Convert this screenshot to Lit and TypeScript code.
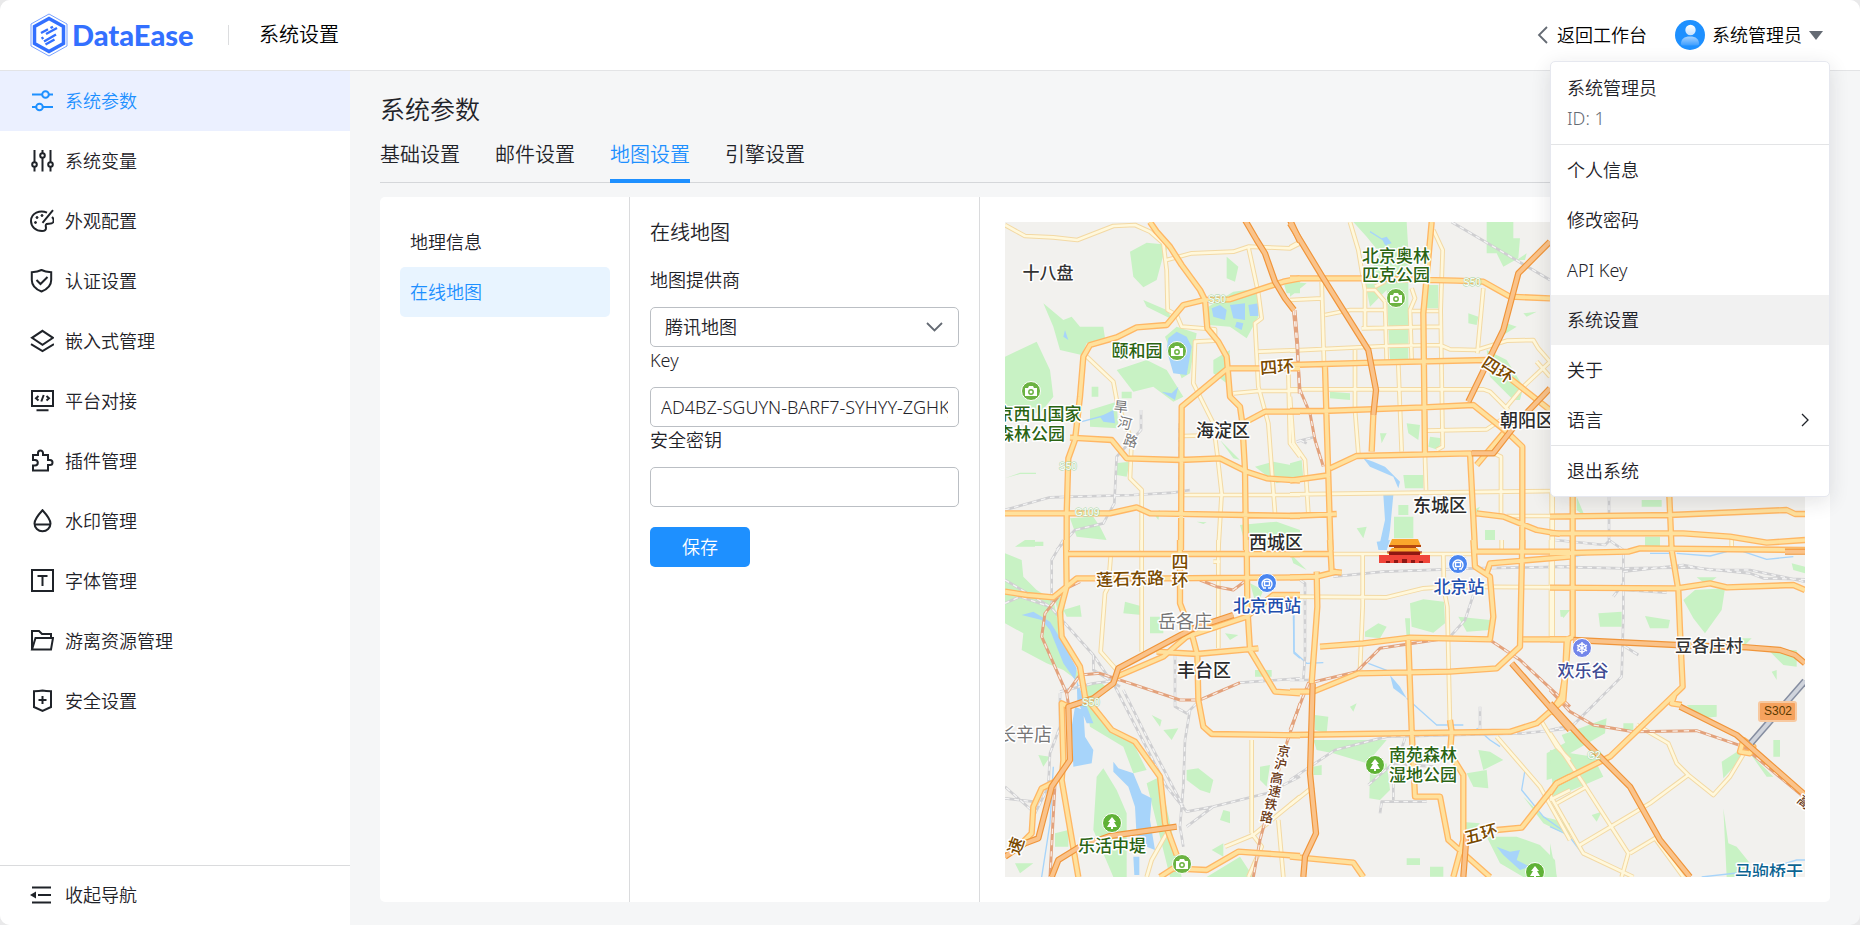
import { LitElement, html, svg, css } from "lit";
import { customElement, state } from "lit/decorators.js";
import { classMap } from "lit/directives/class-map.js";

const NAV = [
  { label: "系统参数", icon: svg`<path d="M2 5.5H12M19 5.5H23M2 18H6M13 18H23"/><circle cx="15.5" cy="5.5" r="3.3"/><circle cx="9.5" cy="18" r="3.3"/>` },
  { label: "系统变量", icon: svg`<path d="M4.5 1V13M4.5 18V22.5M12.500 1V4M12.500 9V22.500M20.500 1V13M20.500 18V22.500"/><circle cx="4.500" cy="15.500" r="2.300"/><circle cx="12.500" cy="6.500" r="2.300"/><circle cx="20.500" cy="15.500" r="2.300"/>` },
  { label: "外观配置", icon: svg`<path d="M17 3.600C10 .5 1 4 1 12c0 6 5 10 11 10 2.500 0 4-1 4-3 0-1.500-1-3 .5-4 1.500-.800 5 .500 6.500-1.500 1-1.500.500-4-1-5.500M23 1.200 12.500 13.800"/><circle cx="7" cy="8.500" r="1" class="dot"/><circle cx="12" cy="6.500" r="1" class="dot"/><circle cx="5.500" cy="13.500" r="1" class="dot"/>` },
  { label: "认证设置", icon: svg`<path d="M11.500 1C8.500 2.500 5 3 1.800 3.200V11c0 6 4.500 9.500 9.700 11.500C16.700 20.500 21.200 17 21.200 11V3.200C18 3 14.500 2.500 11.500 1ZM6.500 11l4 4 7-7"/>` },
  { label: "嵌入式管理", icon: svg`<path d="M12.500 1.800 23 8.800 12.500 15.800 2 8.800ZM1 15.200 12.500 22 24 15.200"/>` },
  { label: "平台对接", icon: svg`<path d="M2 2H23V17H2ZM6.500 21.200H18.500M8.500 7 6 9.300 8.500 11.600M16.500 7 19 9.300 16.500 11.600M13.700 6 11.300 12.500"/>` },
  { label: "插件管理", icon: svg`<path d="M3 6H8V4a2.500 2.500 0 0 1 5 0V6H18V11H20a2.500 2.500 0 0 1 0 5H18V21.500H3V16.500H5a2.800 2.800 0 0 0 0-5.600H3Z"/>` },
  { label: "水印管理", icon: svg`<path d="M12.500 1.200C9 5 4.500 10 4.500 14.500a8 7.700 0 0 0 16 0C20.500 10 16 5 12.500 1.200ZM4.500 15.500H20.500"/>` },
  { label: "字体管理", icon: svg`<path d="M2 1H23V22H2ZM7.500 7H17.500M12.500 7V17"/>` },
  { label: "游离资源管理", icon: svg`<path d="M2 20V2H9L12 5H21V8.500M2 20.500 5.500 9H23L21 20.500Z"/>` },
  { label: "安全设置", icon: svg`<path d="M12.500 1.500C9.500 2.200 6.500 2.200 4 2.200V18L12.500 22 21 18V2.200C18.500 2.200 15.500 2.200 12.500 1.500ZM12.500 7V15M8.500 11H16.500"/>` },
];

const TABS = ["基础设置", "邮件设置", "地图设置", "引擎设置"];

interface Tile {
  x: number;
  y: number;
  green: string;
  water: string;
  river: string;
  rail: string;
  fast: string;
  minor: string;
  major: string;
  highway: string;
}

/* Vector tiles of the base map: each has an origin and is drawn at three units per pixel. */
const TILES: Tile[] = [
  {
    x: 1000, y: 210,
    green: "M390 125L440 98L510 105L490 135L470 210L430 232L400 200ZM130 280L190 330L215 320L240 350L310 350L315 385L260 400L245 435L180 420L160 350ZM15 440L110 395L150 480L160 560L120 610L15 600ZM625 290L700 245L780 235L775 320L740 385L690 350L625 345ZM495 380L530 350L590 370L570 490L545 505ZM350 480L440 450L500 480L550 560L520 575L460 530L400 545ZM430 270L500 300L520 330L440 290ZM640 450L690 420L680 520L640 490ZM765 770L820 755L900 770V800L830 820ZM720 945L830 935L900 960V1020H740ZM210 925L280 920L300 950L320 990L230 980ZM680 140L715 170L705 215L680 205ZM850 215H900V250H860ZM270 600L350 575L355 655L270 650ZM660 690L720 750L700 745ZM275 530H295V560H275ZM365 545H395V565H365ZM15 805L60 788H108V792H60ZM345 760L390 755L380 800L350 795ZM460 910L480 900L475 930ZM590 935L620 937L610 942ZM100 995H130V1008H100Z",
    water: "M505 385L530 365L560 380L575 410L560 495L520 490L500 420ZM635 295L660 285L680 300L675 330L640 320ZM690 285L735 280V330L700 325ZM745 285L775 280V318H750ZM710 335L730 340L725 360L705 350ZM485 545L515 550L535 530L525 570ZM195 360L205 390L190 380ZM300 620L340 600L345 640L310 635Z",
    river: "M245 635L320 615",
    rail: "M15 900L150 862L400 855L520 848L570 840M423 600V660L350 740L343 880L310 940L225 960L170 1020M538 640V840M900 690L920 700",
    fast: "M885 300L893 400L898 550",
    minor: "M15 45L75 78L160 82L232 90L340 48L405 45L450 65L490 100L500 180L503 300L530 315L545 350L645 358V392L585 395L580 520L640 640L655 760L665 850L655 1020M500 150L575 130L700 125L745 110L870 115L900 100M745 110L775 250L785 325L765 340L775 530L805 640L825 910M775 425L900 420M700 550L775 543H900M865 480L870 700L900 740M255 435L340 515L352 580L395 690L390 805L425 840V1020M550 855H900M550 678L660 675",
    major: "M450 36L470 65L510 110L545 165L600 240L615 270L622 355L655 395L680 440L683 475L690 560L720 590L727 640L735 780L738 1020M200 1020V910L205 745L225 690L240 560L250 440L270 405L350 382L410 352L500 345L550 285L612 270L690 268L850 215L900 205M683 475H900M683 475L545 590L543 1020M210 683L335 690L380 745L540 750L660 745L740 785L800 805L900 812M15 910H330L410 892L450 910L900 918M730 640L795 605H900",
    highway: "M735 30L770 90L795 130L825 215L855 265L882 300M870 30L900 95",
  },
  {
    x: 1290, y: 210,
    green: "M190 36H350L355 120V450H300L290 240L240 290L225 215L270 130L230 80ZM590 36H670V85L690 85L685 145L640 170L620 130L590 130ZM590 420L650 450L700 530L690 570L670 570L600 500ZM340 795H400V835H345ZM312 920H370V985H312ZM325 885H355V915H325ZM350 640L390 645L385 690L355 670ZM420 680L455 685L445 720L415 710ZM535 310L565 320L560 345L535 340ZM585 960H615V990H585ZM0 760L35 750L40 805H0ZM0 215L50 220L0 260ZM270 670H290L275 700ZM410 225H445V295H410ZM120 545L180 550V570L120 565ZM700 310L740 305L710 320ZM200 955L230 950L220 985ZM680 150L710 130L705 150ZM650 340L680 350L640 375ZM540 905L570 890L560 910Z",
    water: "M220 745L250 755L285 770L330 815L325 835L310 800L240 770ZM280 855L310 855L300 960L290 1020H265L285 930ZM275 85L290 80L305 100L285 105Z",
    river: "M240 65L280 90L300 120",
    rail: "M485 36L780 210M20 695L70 682",
    fast: "M10 300L20 400L30 540L60 610L75 690L100 770",
    minor: "M180 36L205 120L225 240V355M430 60L458 120L452 300L458 710L440 720M0 270L95 265M95 215L102 460M105 315L180 300H285M215 355L450 350M285 275L290 450M0 422L290 408L450 405L480 418L560 420L650 392L730 390L745 415L780 455L700 530L650 590M580 235L562 430M195 420V600L205 730M0 538H580L600 545L655 600M325 465L335 725M230 240H255L285 275M410 662L590 658L640 625M0 560L10 700L45 750L55 910M0 853L810 843M405 740L408 840M365 235L375 265L360 300L365 450M255 230L285 215M633 910V740L610 730M650 918H810M365 303H445M785 850V1020M0 112L30 95M740 455L780 500",
    major: "M425 36L400 310L405 735M0 205H210L500 212L580 215L660 260L780 265M0 465L250 458L590 450L780 600M0 603H100L400 592L550 585L650 665L697 710V1020M105 470L110 640L122 1020M250 615L245 725M120 775L200 738L540 730L555 1020M0 812L120 795M0 918L140 912M560 910L640 920L740 960L810 972M640 670L560 765",
    highway: "M0 40L100 205L235 420L258 540L250 615M780 95L685 190L640 360L535 575M780 535L680 640L610 730H545",
  },
  {
    x: 1000, y: 540,
    green: "M15 40L65 60L70 110L110 150L160 180L190 320L235 400L230 420L190 390L140 370L65 330L70 280L15 250ZM165 180L200 160L185 260ZM250 440L300 425L330 450L270 480L320 560L400 610L440 690L400 700L370 620L270 560ZM310 685L350 750L380 820V1011H340L280 870L290 710ZM440 730L480 710L545 1011H510L470 850ZM190 210L240 195L245 230L200 230ZM375 185L430 200L425 225L370 220ZM450 230H490V280H450ZM560 690L595 685L640 720L630 760L600 750L560 720ZM620 1011L720 950L760 1011ZM670 810L690 815V850L660 840ZM780 680L810 675L800 740L780 720ZM750 130L790 150L770 200ZM455 525L485 540L480 560ZM490 570L535 565L515 600ZM75 0H105V20H45ZM765 390H815V410H765ZM165 880L205 870V920H165ZM45 970L100 970L60 1000ZM115 645L150 650L130 680ZM675 280L715 285L690 300ZM635 930L670 910V950Z",
    water: "M65 225L100 215L150 245L190 310L230 385L225 420L190 370L150 270L125 240ZM225 500L250 510L255 590L280 630L275 670L220 680L215 560ZM230 420L245 460L280 550L260 550L232 480ZM340 665L355 685L400 700L425 760L455 775L450 840L465 930L440 920L430 890L410 890L405 800L385 740L340 695ZM400 950H418V1005H403Z",
    river: "M882 210V340L900 355M160 680L150 850L125 1011",
    rail: "M190 0L155 60V190M15 120L100 170L150 200L280 345L345 440L500 740L560 815L640 800L800 760L900 710M370 450L450 610L550 800M180 455L280 430L360 420M570 510L555 600L550 740L540 860L550 920M525 345V500L560 520L600 480M720 428L900 415M180 460V560L150 640L145 740L105 820L15 740M15 775L100 785M560 860L640 800M280 345V390L360 440M15 190L60 170L150 200",
    fast: "M240 125L190 150L135 220L125 290L200 460L240 405L300 400L420 440L540 480L600 480L720 428M200 460L208 510M900 490L850 640L780 900L760 1011M600 120L650 140L700 150L740 120M165 730L150 1011",
    minor: "M425 0V335M655 0V325M332 50L325 140L315 160L302 335L350 390M755 600V880M900 770L760 885L675 920M755 880L785 920L745 1011M440 1011L455 960L500 880M835 840L850 1011M640 65H660",
    major: "M198 0L200 140L180 215L185 290L240 380L255 470L335 570L405 605L480 710L495 850L530 945M200 42H900M15 155L80 165L160 172L230 115H490L900 112M540 0V190L575 280L592 345L595 480L610 560L635 582L900 586M740 0L742 200L750 330L825 455L900 460M470 335L590 342L775 325M205 500L185 490L190 660L185 720L235 1011M350 410L490 350L560 290L740 230L820 165H900M480 1011L520 985L620 990L715 935L900 948M65 910L95 880L100 800L125 745L165 725",
    highway: "M700 225L580 265L355 385L340 430L280 475L205 500L210 660L155 740L115 895L75 910L15 950M155 1011L175 960L240 920L330 888L530 860",
  },
  {
    x: 1290, y: 540,
    green: "M360 190L400 178L462 185L465 250L430 278L365 260ZM225 275L265 250L290 260L270 295L225 290ZM505 230L600 240V270L530 275ZM75 525L115 530L110 580L75 570ZM70 600H290L230 670L130 640L80 630ZM240 690L290 670L300 750L270 780L238 775ZM565 630L600 635L640 660L580 690ZM530 700L590 690L595 745L550 740ZM590 890H680L750 915L795 960L800 1011H700L630 970ZM770 640L840 600V700L770 720ZM420 980H460V1010H420ZM350 955H390V975H350ZM700 770L760 830L840 850V890L760 850ZM70 680L95 675V705H70ZM0 40L50 90L10 70ZM510 845L570 850L540 880ZM345 235H360V290H350ZM180 500L200 490L190 515ZM815 210H840L820 235Z",
    water: "M300 405L330 440L350 475L310 445ZM620 920L660 935L690 930L680 960L720 980L690 990L640 945ZM260 5L300 0L290 30L265 28Z",
    river: "M350 475L440 555L520 555M235 370L300 395M560 565L600 600L630 620M705 690L695 750L760 830L830 880M10 210L12 335L50 370L100 368",
    rail: "M30 120L45 130V350L40 420M0 420H60M130 110L280 95L550 85M550 85L840 80M550 165L525 240L480 290M0 720L135 630L290 590L700 580L840 565M345 595L310 700V780M410 785H275L270 820M235 735L310 670L430 680M570 500V570",
    fast: "M0 570L55 430L200 395L270 325L480 293L600 300L690 360L840 500",
    minor: "M218 40V200L210 390M460 40L462 150L472 200L480 560M0 170L290 172L400 145L480 140L840 142M783 0V290M0 795L70 740M620 590L750 740L840 900M755 545L800 620L840 660M780 780L840 750M120 42H550M635 0V30",
    major: "M0 42H120M120 0L125 95L155 98M0 112L80 110L140 95M80 95L82 200L65 430M90 320L220 310L360 293L600 298L610 230L600 110L555 80L550 0M0 455H70L205 400L480 395L620 385L690 320L697 0M355 300L365 570L375 770H450L475 900L600 1011M0 585L660 575L740 550L820 480L835 290M480 540L485 575L480 640L520 705V900L490 1011M0 950L190 968L220 1011M550 35H840M590 100L600 70L840 50M700 298H840M620 870L695 863L800 730L840 710",
    highway: "M68 430L60 700L78 880L45 950L40 1011M665 370L840 570M530 880L520 1011",
  },
  {
    x: 1550, y: 490,
    green: "M145 370L215 365V410H150ZM285 378L360 390L355 415L300 415ZM400 330L435 300L525 295L515 360L465 430L430 385ZM410 645H500V680L450 685ZM515 815L600 760L580 800L520 865ZM600 790L670 860L650 860ZM35 735L170 685L165 730L60 790ZM0 780L130 800L160 860L10 925ZM0 1060L20 1161H0ZM520 955L535 1060L560 1070L600 1120L590 1161H530ZM655 480H740V530L700 525ZM285 140H330V170H285ZM80 20L105 80L80 60ZM275 30H335V50H275ZM670 750H690V800H670ZM725 220L765 230V250L730 240ZM560 445H605L585 465ZM440 262H500L470 285ZM125 975L155 965L140 995ZM665 545L680 540V570ZM220 700L250 700V720H220ZM30 360H42V380H32Z",
    water: "",
    river: "M0 1010L55 1035L100 1095L215 1145M580 185L650 208L730 200M380 190L480 198L530 185M455 1161L640 1140L740 1110H765M70 200L130 190M300 190L360 190",
    rail: "M177 18V150L220 180V380L215 560L70 705L0 720M0 230L220 235L420 232L600 250L640 265L765 268M220 245L400 225L480 240L600 240L765 275M15 150L165 165L180 150M225 300L350 308M190 320L220 280M225 470L265 495",
    fast: "M0 600L60 665L130 705L250 725L440 722L580 770L760 920",
    minor: "M8 18V440M0 730L100 880L235 1090L215 1161M0 915L100 1090L250 1161M20 940L110 890M90 1065L300 940L415 855M260 705L355 760L380 820L415 855L490 915L540 860L585 785M240 1090L315 1045L400 1161M545 145V175",
    major: "M68 18V440L50 450L45 560L35 620L0 670M358 18L365 180L385 300L390 420L398 590L180 800L20 880L0 910M0 80L360 75L710 60L735 72H765M0 130H400L540 140L650 158L765 150M0 190L235 185L270 175L765 180M0 293L380 295L480 280L530 292L730 285L765 300M0 448H60M375 610L365 640L395 645M580 750L610 770L600 790L570 785Z",
    highway: "M70 450L380 465L590 472L690 480L735 495L765 520M0 640L100 750L170 820L240 890L330 1050L420 1161M390 650L560 735L600 770L765 915M705 185H765",
  },
];

type Layer = Exclude<keyof Tile, "x" | "y">;

/* text, centre x, baseline y, style, optional rotation */
const PLACES: [string, number, number, string, number?][] = [
  ["十八盘", 1048, 279, "town"],
  ["海淀区", 1223, 437, "district"],
  ["朝阳区", 1527, 427, "district"],
  ["东城区", 1440, 512, "district"],
  ["西城区", 1276, 549, "district"],
  ["丰台区", 1204, 677, "district"],
  ["豆各庄村", 1709, 652, "town"],
  ["颐和园", 1137, 357, "park"],
  ["北京奥林", 1396, 262, "park"],
  ["匹克公园", 1396, 281, "park"],
  ["京西山国家", 1039, 420, "park"],
  ["森林公园", 1031, 440, "park"],
  ["乐活中堤", 1112, 852, "park"],
  ["南苑森林", 1423, 761, "park"],
  ["湿地公园", 1423, 781, "park"],
  ["北京西站", 1267, 612, "station"],
  ["北京站", 1459, 593, "station"],
  ["欢乐谷", 1583, 677, "fun"],
  ["岳各庄", 1185, 628, "village"],
  ["长辛店", 1025, 741, "village"],
  ["旱", 1121, 412, "street", 5],
  ["河", 1125, 428, "street", 14],
  ["路", 1131, 446, "street", 18],
  ["四环", 1277, 373, "ring", -4],
  ["四环", 1498, 376, "ring", 33],
  ["莲石东路", 1130, 585, "ring", -2],
  ["四", 1180, 568, "ring"],
  ["环", 1180, 586, "ring"],
  ["五环", 1481, 840, "ring", -15],
  ["京", 1284, 756, "railway", 10],
  ["沪", 1281, 769, "railway", 10],
  ["高", 1277, 783, "railway", 10],
  ["速", 1275, 796, "railway", 10],
  ["铁", 1271, 809, "railway", 10],
  ["路", 1267, 822, "railway", 10],
  ["速", 1016, 852, "ring", -70],
  ["高", 1805, 807, "railway", 40],
  ["马驹桥干", 1769, 878, "canal"],
  ["S50", 1217, 303, "code"],
  ["S50", 1068, 470, "code"],
  ["S50", 1472, 286, "code"],
  ["S50", 1091, 706, "code"],
  ["G109", 1087, 516, "code"],
  ["G2", 1594, 759, "code"],
];

const PINS: [string, number, number][] = [
  ["camera", 1031, 391], ["camera", 1177, 351], ["camera", 1396, 298], ["camera", 1182, 864],
  ["tree", 1112, 823], ["tree", 1375, 765], ["tree", 1535, 872],
  ["metro", 1267, 583], ["metro", 1458, 564], ["wheel", 1582, 648],
];

const GLYPHS: Record<string, unknown> = {
  camera: svg`<path class="ink" d="M-6-3H-3L-2-5H2L3-3H6V5H-6Z"/><circle r="2.200" cy="1" class="hole"/>`,
  tree: svg`<path class="ink" d="M0-6 4-1H2L5 4H1V6H-1V4H-5L-2-1H-4Z"/>`,
  metro: svg`<path class="line" d="M-3.500 4.500A5 5 0 1 1 3.500 4.500M-2.500-1.500H2.500V2.500H-2.500ZM-4 5H-1M1 5H4"/>`,
  wheel: svg`<circle class="line" r="4"/><path class="line" d="M0-6V6M-5-3 5 3M-5 3 5-3"/>`,
};

@customElement("city-map")
export class CityMap extends LitElement {
  static styles = css`
    :host { display: block; min-height: 0; overflow: hidden; background: #f2f1ee; }
    svg { display: block; width: 100%; height: 100%; }
    path { fill: none; stroke-linejoin: round; }
    .green path { fill: #c8f2c4; }
    .water path { fill: #a7d4fa; }
    .river path { stroke: #a7d4fa; stroke-width: 4; }
    .rail path { stroke: #cfcfd1; stroke-width: 8; }
    .railDash path { stroke: #f4f4f4; stroke-width: 4; stroke-dasharray: 14 14; }
    .fast path { stroke: #e3a27c; stroke-width: 9; }
    .fastDash path { stroke: #f8ece4; stroke-width: 4; stroke-dasharray: 16 18; }
    .minorEdge path { stroke: #f3d9a4; stroke-width: 14; }
    .minor path { stroke: #fff8dc; stroke-width: 8; }
    .majorEdge path { stroke: #ffb764; stroke-width: 19; }
    .major path { stroke: #ffe19d; stroke-width: 11; }
    .highwayEdge path { stroke: #f0953a; stroke-width: 19; }
    .highway path { stroke: #fac38a; stroke-width: 12; }
    .link { stroke: #858da0; stroke-width: 7; }
    .linkCore { stroke: #d0d4dc; stroke-width: 4; }
    text {
      font-family: "Noto Sans CJK SC", sans-serif;
      font-size: 17px;
      font-weight: 500;
      text-anchor: middle;
      paint-order: stroke;
      stroke: #fff;
      stroke-width: 3px;
      stroke-linejoin: round;
      fill: #333;
    }
    .district { font-size: 18px; fill: #2b2b2b; }
    .park { fill: #2a6413; }
    .station { fill: #1f4fae; }
    .fun { fill: #404c94; }
    .village { font-size: 18px; fill: #777; font-weight: 400; }
    .street { fill: #777; font-weight: 400; font-size: 14px; }
    .ring { fill: #7a4a00; }
    .railway { fill: #6b3a17; font-size: 13px; }
    .canal { fill: #0c6492; }
    .code { font-family: "Liberation Sans", sans-serif; font-size: 10px; font-weight: 400; fill: #fff; stroke: #a9d6a4; stroke-width: 1px; }
    .shield { font-family: "Liberation Sans", sans-serif; font-size: 12px; font-weight: 400; fill: #5b3a00; stroke: none; }
    .camera { fill: #6bb342; }
    .tree { fill: #5fb236; }
    .metro { fill: #4a86f0; }
    .wheel { fill: #7386ea; }
    .rim { stroke: #fff; stroke-width: 1; }
    .ink { fill: #fff; }
    .hole { fill: #fff; stroke: #6bb342; stroke-width: 1.5; }
    .line { fill: none; stroke: #fff; stroke-width: 1.4; }
    .roof { fill: #fba62c; }
    .wood { fill: #b5470f; }
    .wall { fill: #f04438; }
    .dark { fill: #8f1712; }
    .plate { fill: #f5a25e; stroke: #f7c9a0; stroke-width: 2; }
  `;

  private layer(name: Layer, style: string) {
    return svg`<g class=${style}>${TILES.map(
      (t) => svg`<g transform="translate(${t.x} ${t.y}) scale(.33333)"><path d=${t[name] || "M0 0"} /></g>`
    )}</g>`;
  }

  render() {
    return html`<svg viewBox="1005 222 800 655" preserveAspectRatio="xMidYMid slice" role="img" aria-label="在线地图">
      ${this.layer("green", "green")} ${this.layer("water", "water")} ${this.layer("river", "river")}
      ${this.layer("rail", "rail")} ${this.layer("rail", "railDash")}
      ${this.layer("minor", "minorEdge")} ${this.layer("minor", "minor")}
      ${this.layer("fast", "fast")} ${this.layer("fast", "fastDash")}
      ${this.layer("major", "majorEdge")} ${this.layer("major", "major")}
      <path class="link" d="M1805 681 1751 743" /><path class="linkCore" d="M1805 681 1751 743" />
      ${this.layer("highway", "highwayEdge")} ${this.layer("highway", "highway")}
      <path class="roof" d="M1392 539H1418L1421 546H1389ZM1392 548H1417L1422 554H1387Z" />
      <path class="wood" d="M1389 545H1421V547H1389ZM1394 547H1416V548H1394Z" />
      <path class="dark" d="M1387 551.500H1422V552.500H1387ZM1389 552.500H1420V555H1389Z" />
      <path class="wall" d="M1379 555H1430V563H1379Z" />
      <path class="dark" d="M1386 563v-2h4v2ZM1394 563v-3h4v3ZM1402 563v-4h5v4ZM1411 563v-3h4v3ZM1419 563v-2h4v2Z" />
      ${PINS.map(
        ([kind, x, y]) => svg`<g transform="translate(${x} ${y})"><circle r="9.500" class="rim ${kind}"/>${GLYPHS[kind]}</g>`
      )}
      <rect class="plate" x="1759" y="702" width="37" height="19" rx="2" />
      <text class="shield" x="1778" y="715">S302</text>
      ${PLACES.map(
        ([label, x, y, kind, turn = 0]) => svg`<text class=${kind} x=${x} y=${y} transform="rotate(${turn} ${x} ${y - 6})">${label}</text>`
      )}
    </svg>`;
  }
}

@customElement("app-root")
export class AppRoot extends LitElement {
  @state() private menuOpen = true;

  static styles = css`
    :host {
      display: block;
      height: 100vh;
      background: #e9e9ea;
      color: #1f2329;
      font: 400 18px/26px "Noto Sans", "Noto Sans CJK SC", sans-serif;
    }
    * { box-sizing: border-box; }
    a { color: inherit; text-decoration: none; }
    button, input, select { font: inherit; color: inherit; margin: 0; }
    h1, h2 { margin: 0; font-weight: inherit; }
    .page { display: flex; flex-direction: column; height: 100%; border-radius: 10px; overflow: hidden; background: #f5f6f7; font-weight: 350; }
    .header { position: relative; z-index: 2; display: flex; align-items: center; height: 71px; flex: none; padding: 0 37px 0 30px; background: #fff; border-bottom: 1px solid #e3e4e6; }
    .brand { display: flex; align-items: center; gap: 4px; min-width: 198px; color: #3370ff; font: 900 29px/40px Lato, sans-serif; }
    .brand svg { width: 38px; height: 44px; }
    .crumb { display: flex; align-items: center; gap: 30px; font-size: 20px; color: #000; }
    .crumb::before { content: ""; width: 1px; height: 20px; background: #dcdddf; }
    .tools { display: flex; align-items: center; gap: 28px; margin-left: auto; color: #000; }
    .back { display: flex; align-items: center; gap: 9px; }
    .user { display: flex; align-items: center; gap: 7px; padding: 0; border: 0; background: none; cursor: pointer; }
    .caret { border: 7px solid transparent; border-top: 9px solid #646a73; border-bottom: 0; }

    .menu { position: absolute; top: 61px; right: 30px; width: 280px; display: flex; flex-direction: column; background: #fff; border: 1px solid #e6e8ef; border-radius: 5px; box-shadow: 0 5px 20px rgba(31, 35, 41, 0.12); color: #1f2329; }
    .who { display: flex; flex-direction: column; gap: 4px; padding: 13px 16px; border-bottom: 1px solid #e3e4e6; }
    .id { color: #646a73; }
    .entry { display: flex; align-items: center; justify-content: space-between; height: 50px; padding: 0 20px 0 16px; border: 0; background: none; text-align: left; cursor: pointer; }
    .entry.on { background: #f1f1f1; }
    .rule { height: 1px; background: #e3e4e6; }

    .body { display: flex; flex: 1; min-height: 0; }
    .side { display: flex; flex-direction: column; justify-content: space-between; width: 350px; flex: none; background: #fff; }
    .nav { display: flex; flex-direction: column; }
    .item { display: flex; align-items: center; gap: 11px; height: 60px; padding-left: 30px; }
    .item.on { background: #ebf0ff; color: #1e90ff; }
    .item svg { width: 24px; height: 24px; flex: none; fill: none; stroke: currentColor; stroke-width: 2; }
    .item .dot { fill: currentColor; stroke-width: 1; }
    .item .solid { fill: currentColor; stroke: none; }
    .fold { padding-bottom: 2px; border: 0; border-top: 1px solid #dadbdd; background: none; cursor: pointer; }

    .main { display: flex; flex-direction: column; flex: 1; min-width: 0; padding: 22px 30px 23px; }
    .title { font-size: 25px; line-height: 32px; }
    .tabs { display: flex; gap: 35px; margin-bottom: 14px; padding-top: 7px; border-bottom: 1px solid #d5d7da; font-size: 20px; line-height: 46px; }
    .tab { height: 51px; margin-bottom: -1px; }
    .tab.on { color: #1e90ff; border-bottom: 4px solid #1e90ff; }
    .card { display: flex; flex: 1; min-height: 0; background: #fff; border-radius: 5px; }
    .kinds { display: flex; flex-direction: column; width: 250px; flex: none; padding: 20px 19px 20px 20px; border-right: 1px solid #dadbdd; }
    .kind { height: 50px; padding: 0 10px; border-radius: 5px; line-height: 50px; }
    .kind.on { background: #e8f4ff; color: #1e90ff; }
    .form { display: flex; flex-direction: column; width: 350px; flex: none; padding: 20px; border-right: 1px solid #dadbdd; }
    .form h2 { font-size: 20px; line-height: 32px; margin-bottom: 18px; }
    .form label { line-height: 26px; margin-bottom: 14px; }
    .field { width: 100%; height: 40px; padding: 0 10px; border: 1px solid #bbbfc4; border-radius: 5px; background: #fff; outline: none; }
    .pick { display: grid; align-items: center; }
    .pick > * { grid-area: 1 / 1; }
    .pick select { appearance: none; padding: 0 14px; }
    .pick svg { justify-self: end; margin-right: 16px; pointer-events: none; }
    .save { align-self: flex-start; width: 100px; height: 40px; margin-top: 20px; border: 0; border-radius: 5px; background: #1e90ff; color: #fff; cursor: pointer; }
    .view { display: grid; flex: 1; min-width: 0; padding: 25px; }
  `;

  render() {
    return html`<div class="page">
      <header class="header">
        <a class="brand" href="#home">
          <svg viewBox="0 0 38 44" fill="none" stroke="#3370ff">
            <path d="M19 1 37 11V33L19 43 1 33V11Z" stroke-width="1" opacity=".65" />
            <path d="M19 5.500 33.500 13.500V30.500L19 38.500 4.500 30.500V13.500Z" stroke-width="3.500" />
            <path d="M11 20 18 16.300M20.500 15 23 13.700M16 21 27 15M13.500 24.500 11.500 25.600M14 28.500 26 21.500M15.500 31.500 24.500 26.500" stroke-width="2.400" />
          </svg>
          <span>DataEase</span>
        </a>
        <span class="crumb">系统设置</span>
        <div class="tools">
          <a class="back" href="#workbench">
            <svg width="11" height="18" viewBox="0 0 11 18" fill="none" stroke="#646a73" stroke-width="1.800"><path d="M10 1 2 9 10 17" /></svg>返回工作台
          </a>
          <button class="user" type="button" aria-expanded=${this.menuOpen} @click=${() => (this.menuOpen = !this.menuOpen)}>
            <svg width="30" height="30" viewBox="0 0 30 30">
              <defs>
                <linearGradient id="skin" x2="0" y2="1"><stop stop-color="#fff" /><stop offset="1" stop-color="#c4e1ff" /></linearGradient>
                <linearGradient id="coat" x2="0" y2="1"><stop stop-color="#a6d2ff" /><stop offset="1" stop-color="#3b9dff" /></linearGradient>
              </defs>
              <circle cx="15" cy="15" r="15" fill="#1e90ff" />
              <path d="M6 24c0-5 3-7.500 9-7.500s9 2.500 9 7.500c0 1-1 1.500-2 1.500H8c-1 0-2-.5-2-1.500Z" fill="url(#coat)" />
              <circle cx="15.500" cy="10" r="5.200" fill="url(#skin)" />
            </svg>
            系统管理员<span class="caret"></span>
          </button>
        </div>
        ${this.menuOpen ? this.menu() : ""}
      </header>
      <div class="body">
        <aside class="side">
          <nav class="nav">
            ${NAV.map(
              (n, i) => html`<a class=${classMap({ item: true, on: i === 0 })} href="#nav"><svg viewBox="0 0 24 24">${n.icon}</svg>${n.label}</a>`
            )}
          </nav>
          <button class="item fold" type="button">
            <svg viewBox="0 0 24 24"><path d="M2 4.500H21M8 12H21M2 19.500H21" /><path class="solid" d="M0 12 6 8.500V15.500Z" /></svg>收起导航
          </button>
        </aside>
        <main class="main">
          <h1 class="title">系统参数</h1>
          <nav class="tabs">${TABS.map((t, i) => html`<a class=${classMap({ tab: true, on: i === 2 })} href="#tab">${t}</a>`)}</nav>
          <section class="card">
            <nav class="kinds"><a class="kind" href="#geo">地理信息</a><a class="kind on" href="#online">在线地图</a></nav>
            <form class="form" @submit=${(e: Event) => e.preventDefault()}>
              <h2>在线地图</h2>
              <label for="provider">地图提供商</label>
              <div class="pick">
                <select id="provider" class="field"><option>腾讯地图</option></select>
                <svg width="17" height="10" viewBox="0 0 17 10" fill="none" stroke="#646a73" stroke-width="1.800"><path d="M1 1 8.500 8.500 16 1" /></svg>
              </div>
              <label for="key">Key</label>
              <input id="key" class="field" type="text" .value=${"AD4BZ-SGUYN-BARF7-SYHYY-ZGHKJ"} />
              <label for="secret">安全密钥</label>
              <input id="secret" class="field" type="text" />
              <button class="save" type="submit">保存</button>
            </form>
            <div class="view"><city-map></city-map></div>
          </section>
        </main>
      </div>
    </div>`;
  }

  private menu() {
    return html`<div class="menu">
      <div class="who"><span>系统管理员</span><span class="id">ID: 1</span></div>
      <button class="entry" type="button">个人信息</button>
      <button class="entry" type="button">修改密码</button>
      <button class="entry" type="button">API Key</button>
      <button class="entry on" type="button">系统设置</button>
      <button class="entry" type="button">关于</button>
      <button class="entry" type="button">
        语言<svg width="8" height="14" viewBox="0 0 8 14" fill="none" stroke="#1f2329" stroke-width="1.300"><path d="M1 1 7 7 1 13" /></svg>
      </button>
      <div class="rule"></div>
      <button class="entry" type="button">退出系统</button>
    </div>`;
  }
}
